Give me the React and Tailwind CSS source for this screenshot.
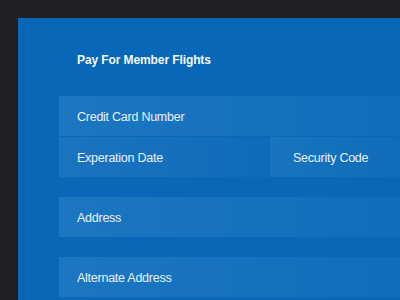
export default function App() {
  const field = "flex items-center pt-[2px] text-[#e8f1fa] text-[12.5px] tracking-[-0.25px]";
  return (
    <div className="w-[400px] h-[300px] bg-[#1e2025] overflow-hidden pl-[18px] pt-[18px]" style={{ fontFamily: '"Liberation Sans", Arial, sans-serif' }}>
      <div className="w-[382px] h-[282px] bg-[#0867b7] flex flex-col">
        <div className="h-[78px] pl-[59px] flex items-center pt-[6px]">
          <span className="text-[#f4f8fc] text-[12px] font-bold leading-none tracking-[-0.1px]">Pay For Member Flights</span>
        </div>
        <div className="pl-[41px] flex flex-col">
          <div className={`h-[40px] pl-[18px] bg-gradient-to-r from-[#1c77c2] to-[#0f6dbb] ${field}`}>Credit Card Number</div>
          <div className="h-[40px] mt-[1px] flex gap-[1px]">
            <div className={`w-[210px] pl-[18px] bg-gradient-to-r from-[#1a74c0] to-[#0e6bb9] ${field}`}>Experation Date</div>
            <div className={`flex-1 pl-[23px] bg-gradient-to-r from-[#1874bf] to-[#0f6cba] ${field}`}>Security Code</div>
          </div>
          <div className={`h-[40px] mt-[20px] pl-[18px] bg-gradient-to-r from-[#1c77c2] to-[#0f6dbb] ${field}`}>Address</div>
          <div className={`h-[40px] mt-[20px] pl-[18px] bg-gradient-to-r from-[#1c77c2] to-[#0f6dbb] ${field}`}>Alternate Address</div>
        </div>
      </div>
    </div>
  );
}
